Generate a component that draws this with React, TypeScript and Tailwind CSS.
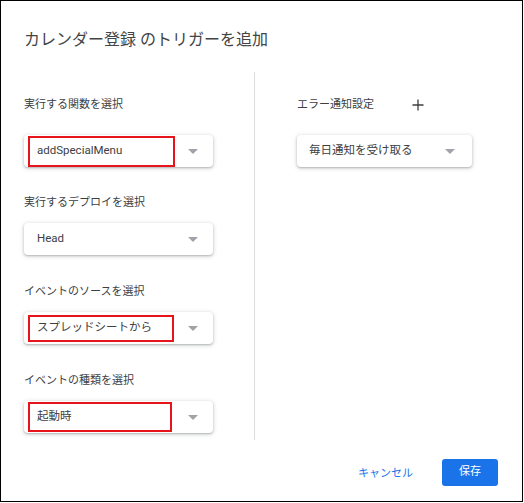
import React from "react";

const Arrow = () => (
  <svg width="10" height="5" viewBox="0 0 10 5" className="shrink-0">
    <path d="M0 0 L10 0 L5 5 Z" fill="#a0a4a8" />
  </svg>
);

function Select({
  value,
  width,
  arrowRight,
  padLeft,
  red,
}: {
  value: string;
  width: string;
  arrowRight: string;
  padLeft: string;
  red?: { top: number; width: number; height: number };
}) {
  return (
    <div
      className={`relative h-[32px] ${width} rounded-[4px] bg-white shadow-[0_1px_2px_0_rgba(60,64,67,0.3),0_1px_4px_1px_rgba(60,64,67,0.15)] flex items-center justify-between ${padLeft} ${arrowRight}`}
    >
      <span className="text-[11.5px] leading-none text-[#3c4043]">{value}</span>
      <Arrow />
      {red && (
        <div
          className="absolute left-[4px] border-2 border-[#e8141b]"
          style={{ top: red.top, width: red.width, height: red.height }}
        />
      )}
    </div>
  );
}

export default function App() {
  return (
    <div
      className="w-[523px] h-[502px] border border-black bg-white px-[23px]"
      style={{ fontFamily: 'Roboto, "Noto Sans CJK JP", sans-serif' }}
    >
      <div className="pt-[27px] h-[24px] box-content text-[16px] leading-[24px] text-[#444]">
        カレンダー登録 のトリガーを追加
      </div>
      <div className="mt-[20px] flex h-[368px]">
        <div className="w-[230px] pt-[25px]">
          <div className="text-[11px] leading-[16px] text-[#3c4043]">実行する関数を選択</div>
          <div className="mt-[22px]">
            <Select
              value="addSpecialMenu"
              width="w-[189px]"
              padLeft="pl-[13px]"
              arrowRight="pr-[15px]"
              red={{ top: 1, width: 147, height: 31 }}
            />
          </div>
          <div className="mt-[28px] text-[11px] leading-[16px] text-[#3c4043]">実行するデプロイを選択</div>
          <div className="mt-[12px]">
            <Select value="Head" width="w-[189px]" padLeft="pl-[13px]" arrowRight="pr-[15px]" />
          </div>
          <div className="mt-[29px] text-[11px] leading-[16px] text-[#3c4043]">イベントのソースを選択</div>
          <div className="mt-[12px]">
            <Select
              value="スプレッドシートから"
              width="w-[189px]"
              padLeft="pl-[13px]"
              arrowRight="pr-[15px]"
              red={{ top: 3, width: 146, height: 27 }}
            />
          </div>
          <div className="mt-[29px] text-[11px] leading-[16px] text-[#3c4043]">イベントの種類を選択</div>
          <div className="mt-[12px]">
            <Select
              value="起動時"
              width="w-[189px]"
              padLeft="pl-[13px]"
              arrowRight="pr-[15px]"
              red={{ top: 1, width: 144, height: 30 }}
            />
          </div>
        </div>
        <div className="w-px bg-[#dadce0]" />
        <div className="pl-[42px] pt-[25px]">
          <div className="flex items-center h-[16px]">
            <span className="text-[11px] leading-[16px] text-[#3c4043]">エラー通知設定</span>
            <svg width="12" height="12" viewBox="0 0 12 12" className="ml-[38px]">
              <path d="M6 0.5 V11.5 M0.5 6 H11.5" stroke="#3c4043" strokeWidth="1.3" />
            </svg>
          </div>
          <div className="mt-[22px]">
            <Select value="毎日通知を受け取る" width="w-[175px]" padLeft="pl-[12px]" arrowRight="pr-[17px]" />
          </div>
        </div>
      </div>
      <div className="mt-[19px] flex justify-end items-center pr-[1px]">
        <span className="text-[11px] leading-[16px] text-[#1a73e8] mr-[29px] translate-y-[1px]">キャンセル</span>
        <div className="w-[56px] h-[27px] rounded-[3px] bg-[#1a73e8] flex items-center justify-center text-[11px] text-white">
          保存
        </div>
      </div>
    </div>
  );
}
